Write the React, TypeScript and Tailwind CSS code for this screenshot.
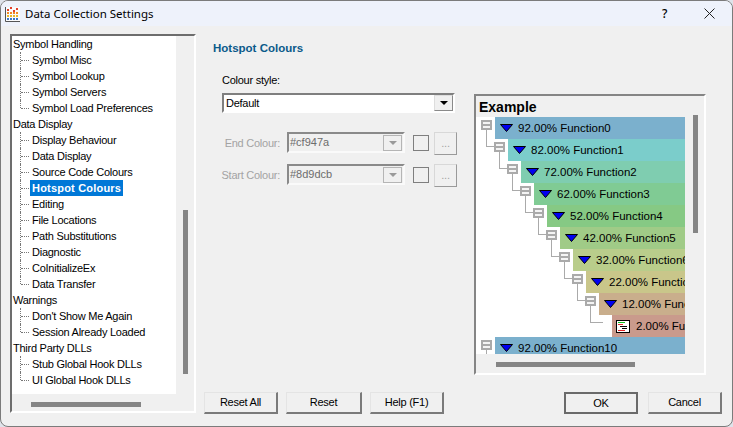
const treeGroups = [
  { name: "Symbol Handling", items: ["Symbol Misc", "Symbol Lookup", "Symbol Servers", "Symbol Load Preferences"] },
  {
    name: "Data Display",
    items: [
      "Display Behaviour",
      "Data Display",
      "Source Code Colours",
      "Hotspot Colours",
      "Editing",
      "File Locations",
      "Path Substitutions",
      "Diagnostic",
      "CoInitializeEx",
      "Data Transfer",
    ],
  },
  { name: "Warnings", items: ["Don't Show Me Again", "Session Already Loaded"] },
  { name: "Third Party DLLs", items: ["Stub Global Hook DLLs", "UI Global Hook DLLs"] },
];

const hotspotRows = [
  { label: "92.00% Function0", color: "#7bb0cd" },
  { label: "82.00% Function1", color: "#7bcdcb" },
  { label: "72.00% Function2", color: "#7fcdb0" },
  { label: "62.00% Function3", color: "#80cb94" },
  { label: "52.00% Function4", color: "#86c984" },
  { label: "42.00% Function5", color: "#a0cb87" },
  { label: "32.00% Function6", color: "#b9cd8b" },
  { label: "22.00% Function7", color: "#c9c68a" },
  { label: "12.00% Function8", color: "#c9ae8c" },
  { label: "2.00% Function9", color: "#c99a8c", leaf: true },
];

function TreeChild({ label, last, selected }: { label: string; last: boolean; selected: boolean }) {
  return (
    <div className="relative h-4 pl-[17px]">
      <span
        className={`absolute left-[7px] top-0 border-l border-dotted border-[#777] ${last ? "h-[8px]" : "h-4"}`}
      />
      <span className="absolute left-[8px] top-[8px] w-[8px] border-t border-dotted border-[#777]" />
      <span
        className={`inline-block h-4 px-[2px] leading-4 ${
          selected ? "bg-[#0078d7] font-bold tracking-[0.2px] text-white" : "text-black"
        }`}
      >
        {label}
      </span>
    </div>
  );
}

function NavTree() {
  return (
    <div className="flex h-[379px] w-[186px] flex-col border-2 border-[#6d6d6d] border-r-white border-b-white">
      <div className="flex h-[358px]">
        <div className="w-[164px] bg-white pl-[1px]">
          {treeGroups.map((g) => (
            <div key={g.name}>
              <div className="h-4 leading-4 text-black">{g.name}</div>
              {g.items.map((item, i) => (
                <TreeChild
                  key={item}
                  label={item}
                  last={i === g.items.length - 1}
                  selected={item === "Hotspot Colours"}
                />
              ))}
            </div>
          ))}
        </div>
        <div className="flex flex-1 justify-end pr-[6px] pt-[174px]">
          <div className="h-[164px] w-[5px] bg-[#858585]" />
        </div>
      </div>
      <div className="h-[17px] pl-[19px] pt-[8px]">
        <div className="h-[5px] w-[110px] bg-[#858585]" />
      </div>
    </div>
  );
}

function ColourRow({ label, value }: { label: string; value: string }) {
  return (
    <div className="flex h-[23px] items-start">
      <span className="mr-[7px] mt-[3px] w-[63px] text-right text-[#a3a3a3]">{label}</span>
      <div className="flex h-[21px] w-[118px] items-center border-2 border-[#8a8a8a] border-r-[#fafafa] border-b-[#fafafa] bg-[#f0f0f0]">
        <span className="flex-1 pl-px tracking-normal text-[#6d6d6d]">{value}</span>
        <div className="mr-px flex h-[16px] w-[19px] items-center justify-center border border-[#b5b5b5] bg-[#f0f0f0]">
          <span className="h-0 w-0 border-x-[4px] border-t-[4px] border-x-transparent border-t-[#9a9a9a]" />
        </div>
      </div>
      <div className="ml-[8px] mt-[3px] h-[16px] w-[16px] border border-[#7f7f7f] bg-[#f0f0f0]" />
      <div className="ml-[5px] flex h-[23px] w-[23px] items-center justify-center border border-[#d8d8d8] border-b-[#9a9a9a] border-r-[#9a9a9a] text-[#a3a3a3]">
        ...
      </div>
    </div>
  );
}

function FuncIcon({ leaf }: { leaf?: boolean }) {
  if (leaf) {
    return (
      <svg width="14" height="13" viewBox="0 0 14 13" className="shrink-0">
        <rect x="0.5" y="0.5" width="13" height="12" fill="#fff" stroke="#000" />
        <path d="M2 2.5h7" stroke="#10c020" strokeWidth="1" />
        <path d="M2 4.5h5" stroke="#e03030" strokeWidth="1" />
        <path d="M4 6.5h7M6 8.5h5" stroke="#000" strokeWidth="1" />
        <path d="M2 10.5h7" stroke="#e02020" strokeWidth="1" />
      </svg>
    );
  }
  return (
    <svg width="13" height="8" viewBox="0 0 13 8" className="shrink-0">
      <path d="M0.5 0.5H12.5L6.5 7.5Z" fill="#0000f0" stroke="#000" />
    </svg>
  );
}

function ExpandBox() {
  return (
    <span className="absolute left-[5px] top-[3px] h-[10px] w-[11px] border-2 border-[#aaa] bg-[#f4f4f4]">
      <span className="mx-auto mt-[2px] block h-[2px] w-[7px] bg-[#aaa]" />
    </span>
  );
}

function HotspotRow({ label, color, leaf, indent }: { label: string; color: string; leaf?: boolean; indent: number }) {
  return (
    <div className="relative h-[22px] whitespace-nowrap" style={{ marginLeft: indent }}>
      {indent > 0 && (
        <>
          <span className="absolute left-[-3px] top-[-10px] h-[18px] w-px bg-[#aaa]" />
          <span className={`absolute left-[-3px] top-[7px] h-px bg-[#aaa] ${leaf ? "w-[13px]" : "w-[8px]"}`} />
        </>
      )}
      {!leaf && <ExpandBox />}
      <div className={`ml-[19px] flex h-[22px] items-center ${leaf ? "pl-[4px]" : "pl-[5px]"}`} style={{ background: color }}>
        <FuncIcon leaf={leaf} />
        <span className={`pt-px ${leaf ? "ml-[6px]" : "ml-[5px]"}`}>{label}</span>
      </div>
    </div>
  );
}

function ExamplePanel() {
  return (
    <div className="flex h-[281px] w-[232px] flex-col border-2 border-[#858585] border-r-white border-b-white">
      <div className="h-[21px] pl-[3px] pt-[3px] text-[14px] font-bold leading-[16px] tracking-normal text-black">
        Example
      </div>
      <div className="flex">
        <div className="h-[237px] w-[209px] overflow-hidden bg-white text-[11.5px] tracking-normal text-black">
          {hotspotRows.map((r, i) => (
            <HotspotRow key={r.label} {...r} indent={i * 13} />
          ))}
          <div className="relative h-[22px] whitespace-nowrap">
            <span className="absolute left-[10px] top-[12px] h-[8px] w-px bg-[#aaa]" />
            <ExpandBox />
            <div className="ml-[19px] flex h-[22px] items-center pl-[5px]" style={{ background: "#7bb0cd" }}>
              <FuncIcon />
              <span className="ml-[5px] pt-px">92.00% Function10</span>
            </div>
          </div>
        </div>
        <div className="flex-1 pl-[8px]">
          <div className="-mt-[2px] h-[118px] w-[5px] bg-[#858585]" />
        </div>
      </div>
      <div className="h-[19px] pl-[20px] pt-[8px]">
        <div className="h-[5px] w-[139px] bg-[#858585]" />
      </div>
    </div>
  );
}

function DialogButton({ label, width, primary }: { label: string; width: string; primary?: boolean }) {
  return (
    <button
      type="button"
      className={`h-[22px] ${width} bg-[#f0f0f0] text-black ${
        primary
          ? "border-2 border-[#6a6a6a]"
          : "border border-[#e4e4e4] border-b-2 border-r-2 border-b-[#7a7a7a] border-r-[#7a7a7a]"
      }`}
    >
      {label}
    </button>
  );
}

function AppIcon() {
  return (
    <svg width="16" height="16" viewBox="0 0 16 16" className="shrink-0">
      <rect x="1" y="1" width="14" height="14" fill="#fbfbfb" />
      <path d="M0.5 1v14.5H15" fill="none" stroke="#555" strokeWidth="1" />
      {[2, 5, 8, 11].map((x, i) => (
        <g key={x}>
          <rect x={x} y={[3, 1, 4, 2][i]} width="2" height="2" fill="#e2402a" />
          <rect x={x} y="6" width="2" height="2" fill="#f08a24" />
          <rect x={x} y="9" width="2" height="2" fill="#e8b828" />
          <rect x={x} y="12" width="2" height="2" fill="#3a78c8" />
        </g>
      ))}
    </svg>
  );
}

export default function App() {
  return (
    <div className="h-[427px] w-[733px] overflow-hidden bg-[#dfe3ea] font-['Liberation_Sans',sans-serif] text-[11px] tracking-[-0.25px]">
      <div className="flex h-full flex-col overflow-hidden rounded-lg border border-[#7b7b7b] bg-[#f0f0f0]">
        <div className="flex h-[25px] shrink-0 items-center bg-[#eef2fb] pl-[4px] text-black">
          <AppIcon />
          <span className="ml-[4px] pt-px font-['Noto_Sans',sans-serif] text-[11.5px] tracking-normal">
            Data Collection Settings
          </span>
          <span className="ml-auto font-['Noto_Sans',sans-serif] text-[12px] font-medium">?</span>
          <svg width="11" height="11" viewBox="0 0 11 11" className="ml-[37px] mr-[17px]">
            <path d="M0.5 0.5l10 10M10.5 0.5l-10 10" stroke="#222" strokeWidth="1" />
          </svg>
        </div>

        <div className="flex flex-1 pb-[12px] pl-[9px] pr-[10px] pt-[8px]">
          <NavTree />
          <div className="ml-[7px] flex min-w-0 flex-1 flex-col justify-between">
            <div className="flex">
              <div className="w-[271px] pl-[10px]">
                <div className="mt-[7px] text-[11.5px] font-bold leading-[14px] tracking-normal text-[#0b5a8a]">
                  Hotspot Colours
                </div>
                <div className="ml-[9px] mt-[18px] leading-[14px] text-black">Colour style:</div>
                <div className="ml-[9px] mt-[6px] flex h-[20px] w-[233px] items-center border-2 border-[#7f7f7f] border-r-white border-b-white bg-white">
                  <span className="flex-1 pl-[2px] text-black">Default</span>
                  <div className="flex h-[16px] w-[19px] items-center justify-center border border-[#8a8a8a] border-l-[#ddd] border-t-[#ddd] bg-[#f0f0f0]">
                    <span className="h-0 w-0 border-x-[4px] border-t-[4px] border-x-transparent border-t-black" />
                  </div>
                </div>
                <div className="ml-[4px] mt-[19px] flex flex-col gap-[9px]">
                  <ColourRow label="End Colour:" value="#cf947a" />
                  <ColourRow label="Start Colour:" value="#8d9dcb" />
                </div>
              </div>
              <div className="mt-[60px]">
                <ExamplePanel />
              </div>
            </div>
            <div className="flex pl-[1px]">
              <div className="flex gap-[8px]">
                <DialogButton label="Reset All" width="w-[74px]" />
                <DialogButton label="Reset" width="w-[76px]" />
                <DialogButton label="Help (F1)" width="w-[74px]" />
              </div>
              <div className="ml-auto flex gap-[10px]">
                <DialogButton label="OK" width="w-[74px]" primary />
                <DialogButton label="Cancel" width="w-[74px]" />
              </div>
            </div>
          </div>
        </div>
      </div>
    </div>
  );
}
